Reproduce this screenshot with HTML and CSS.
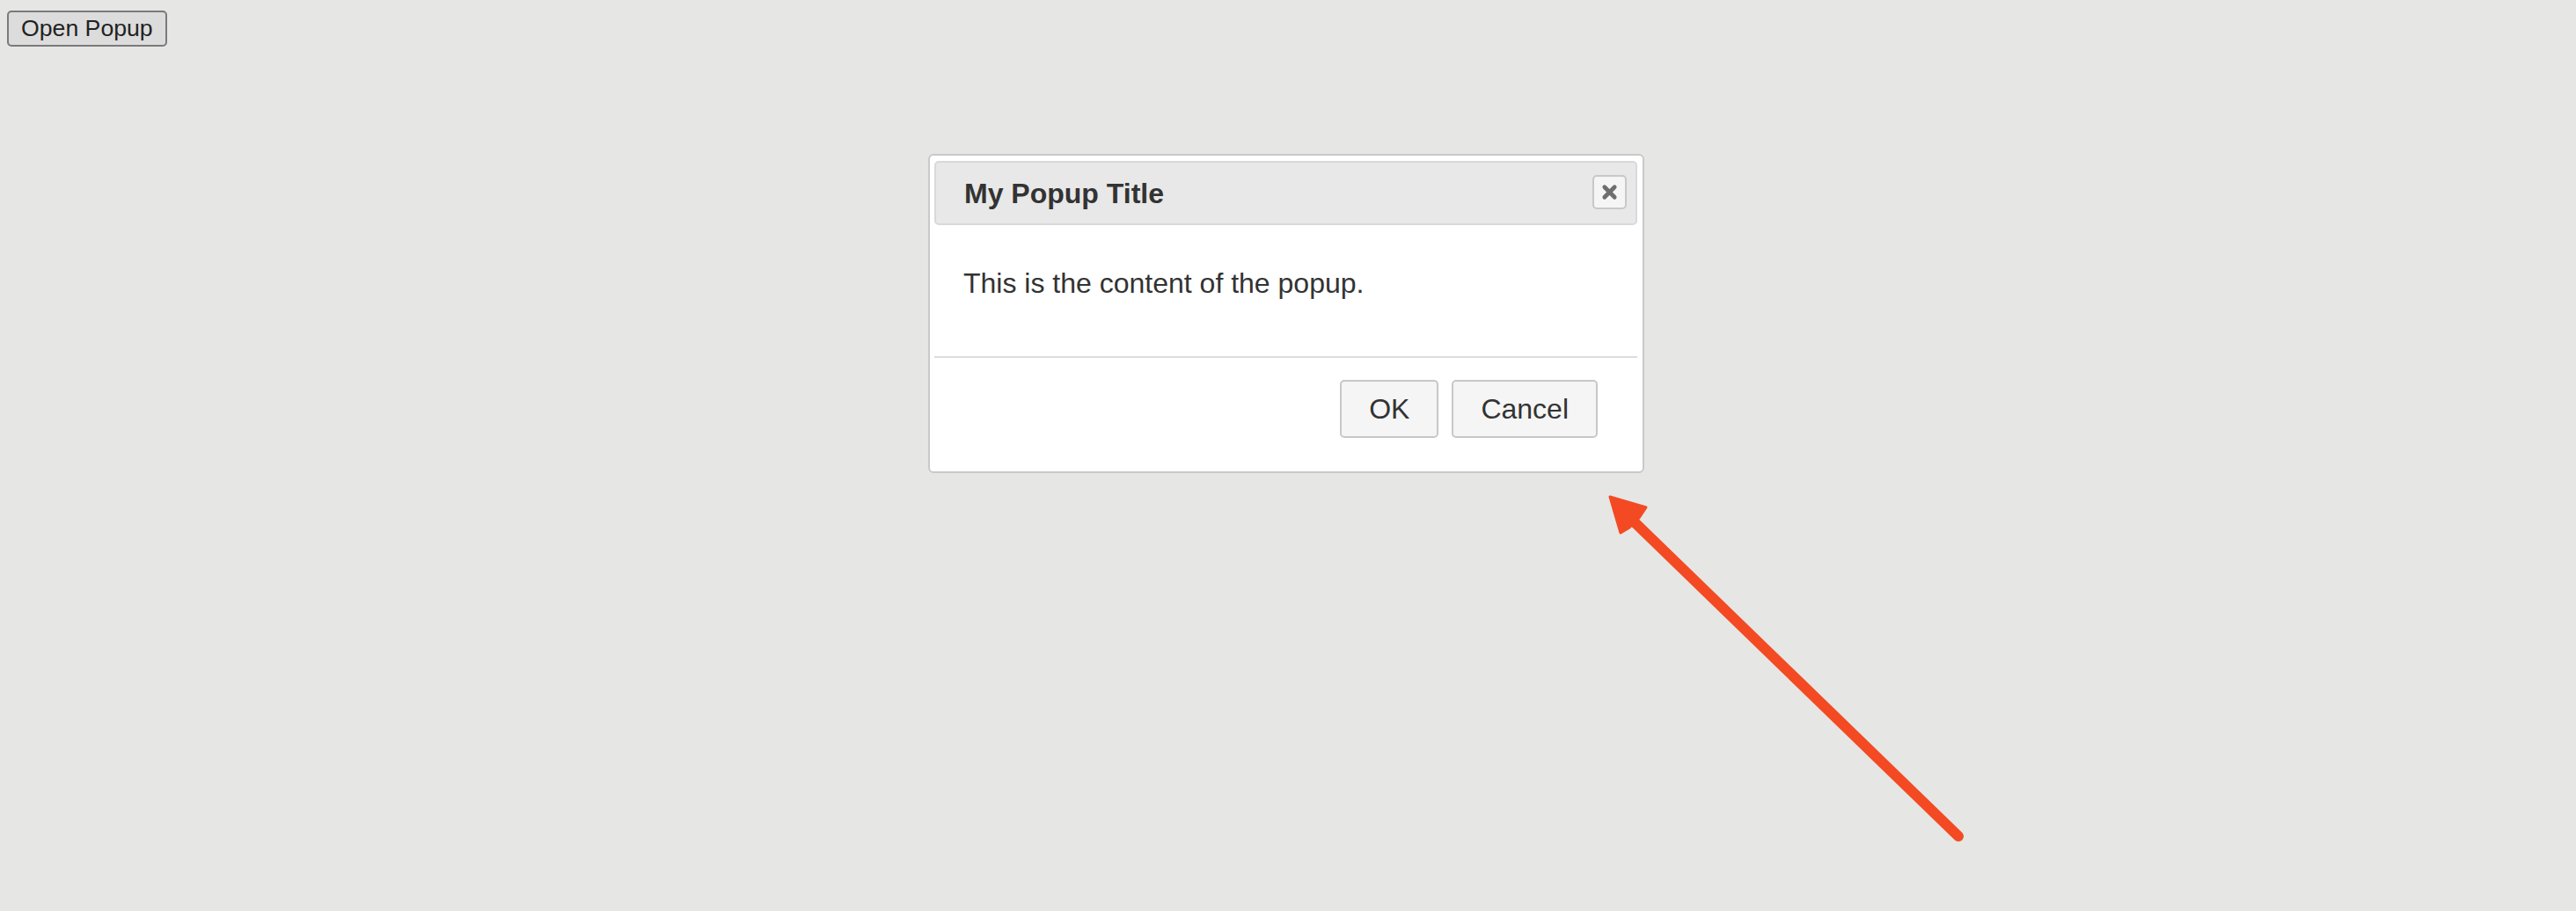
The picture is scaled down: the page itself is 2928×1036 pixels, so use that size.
FILE: index.html
```html
<!DOCTYPE html>
<html lang="en">
<head>
<meta charset="utf-8">
<title>Popup</title>
<link rel="stylesheet" href="styles.css">
</head>
<body>
<div class="page">
  <button class="open-btn" type="button">Open Popup</button>

  <div class="dialog" role="dialog" aria-labelledby="dlg-title">
    <div class="dialog-header">
      <span class="dialog-title" id="dlg-title">My Popup Title</span>
      <button class="close-btn" type="button" aria-label="Close">
        <svg class="close-icon" viewBox="0 0 20 20" width="20" height="20" aria-hidden="true">
          <path d="M4 4 L16 16 M16 4 L4 16" stroke="#6e6e6e" stroke-width="5" stroke-linecap="round" fill="none"/>
        </svg>
      </button>
    </div>
    <div class="dialog-body">
      <p class="dialog-text">This is the content of the popup.</p>
    </div>
    <div class="dialog-footer">
      <button class="dlg-btn" type="button">OK</button>
      <button class="dlg-btn" type="button">Cancel</button>
    </div>
  </div>

  <svg class="annotation" viewBox="0 0 2928 1036" width="2928" height="1036" aria-hidden="true">
    <line x1="1858" y1="594" x2="2226" y2="951" stroke="#f34a24" stroke-width="12" stroke-linecap="round"/>
    <polygon points="1830,565 1871,577 1863,589 1852,600 1842,606" fill="#f34a24" stroke="#f34a24" stroke-width="3" stroke-linejoin="round"/>
  </svg>
</div>
</body>
</html>
```

FILE: styles.css
```css
html, body {
  margin: 0;
  padding: 0;
  background: #e6e6e4;
}

body {
  font-family: "Liberation Sans", Arial, sans-serif;
  color: #333;
  width: 2928px;
  height: 1036px;
  overflow: hidden;
}

.page {
  position: relative;
  width: 2928px;
  height: 1036px;
  padding: 12px 8px 0;
  box-sizing: border-box;
}

.open-btn {
  font-family: "Liberation Sans", Arial, sans-serif;
  font-size: 26.67px;
  line-height: 31px;
  color: #222;
  background: #dcdcdc;
  border: 2px solid #7a7a7a;
  border-radius: 5px;
  padding: 3px 14px;
  margin: 0;
}

.dialog {
  position: absolute;
  left: 1055px;
  top: 175px;
  width: 814px;
  box-sizing: border-box;
  background: #fff;
  border: 2px solid #c9c9c9;
  border-radius: 6px;
  padding: 6px 6px 0 5px;
}

.dialog-header {
  display: flex;
  align-items: center;
  justify-content: space-between;
  height: 73px;
  box-sizing: border-box;
  background: #e8e8e8;
  border: 2px solid #d9d9d9;
  border-radius: 5px;
  padding: 0 10px 0 32px;
}

.dialog-title {
  font-size: 32px;
  line-height: 36px;
  font-weight: bold;
  color: #333;
}

.close-btn {
  width: 39px;
  height: 39px;
  box-sizing: border-box;
  margin: 0 0 2px;
  padding: 0;
  background: #f5f5f5;
  border: 2px solid #c8c8c8;
  border-radius: 5px;
  display: flex;
  align-items: center;
  justify-content: center;
}

.close-icon {
  display: block;
  width: 19px;
  height: 19px;
}

.dialog-body {
  padding: 48px 33px 65px;
}

.dialog-text {
  margin: 0;
  font-size: 32px;
  line-height: 36px;
  color: #333;
}

.dialog-footer {
  display: flex;
  justify-content: flex-end;
  gap: 15px;
  border-top: 2px solid #dcdcdc;
  padding: 25px 45px 38px;
}

.dlg-btn {
  font-family: "Liberation Sans", Arial, sans-serif;
  font-size: 32px;
  line-height: 38px;
  color: #333;
  background: #f5f5f5;
  border: 2px solid #c8c8c8;
  border-radius: 5px;
  padding: 12px 31px;
  margin: 0;
}

.annotation {
  position: absolute;
  left: 0;
  top: 0;
  pointer-events: none;
}
```
